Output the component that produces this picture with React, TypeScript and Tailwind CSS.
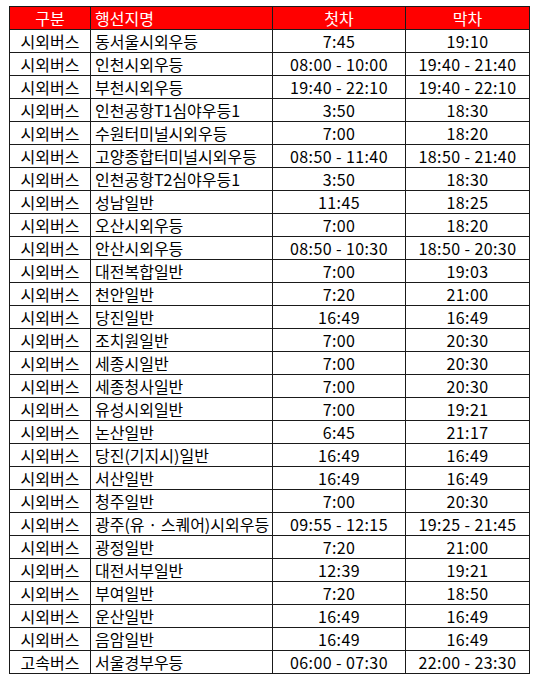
import React from 'react';

type Row = [string, string, string, string];

const ROWS: Row[] = [
  ['시외버스', '동서울시외우등', '7:45', '19:10'],
  ['시외버스', '인천시외우등', '08:00 - 10:00', '19:40 - 21:40'],
  ['시외버스', '부천시외우등', '19:40 - 22:10', '19:40 - 22:10'],
  ['시외버스', '인천공항T1심야우등1', '3:50', '18:30'],
  ['시외버스', '수원터미널시외우등', '7:00', '18:20'],
  ['시외버스', '고양종합터미널시외우등', '08:50 - 11:40', '18:50 - 21:40'],
  ['시외버스', '인천공항T2심야우등1', '3:50', '18:30'],
  ['시외버스', '성남일반', '11:45', '18:25'],
  ['시외버스', '오산시외우등', '7:00', '18:20'],
  ['시외버스', '안산시외우등', '08:50 - 10:30', '18:50 - 20:30'],
  ['시외버스', '대전복합일반', '7:00', '19:03'],
  ['시외버스', '천안일반', '7:20', '21:00'],
  ['시외버스', '당진일반', '16:49', '16:49'],
  ['시외버스', '조치원일반', '7:00', '20:30'],
  ['시외버스', '세종시일반', '7:00', '20:30'],
  ['시외버스', '세종청사일반', '7:00', '20:30'],
  ['시외버스', '유성시외일반', '7:00', '19:21'],
  ['시외버스', '논산일반', '6:45', '21:17'],
  ['시외버스', '당진(기지시)일반', '16:49', '16:49'],
  ['시외버스', '서산일반', '16:49', '16:49'],
  ['시외버스', '청주일반', '7:00', '20:30'],
  ['시외버스', '광주(유 · 스퀘어)시외우등', '09:55 - 12:15', '19:25 - 21:45'],
  ['시외버스', '광정일반', '7:20', '21:00'],
  ['시외버스', '대전서부일반', '12:39', '19:21'],
  ['시외버스', '부여일반', '7:20', '18:50'],
  ['시외버스', '운산일반', '16:49', '16:49'],
  ['시외버스', '음암일반', '16:49', '16:49'],
  ['고속버스', '서울경부우등', '06:00 - 07:30', '22:00 - 23:30'],
];

const cell = 'border border-[#1a1a1a] h-[23px] p-0 leading-[21px]';

export default function App() {
  return (
    <div className="w-[544px] h-[690px] bg-white pt-[6px] pl-[9px] font-['Noto_Sans_CJK_KR',sans-serif] text-[16px] text-black">
      <table className="table-fixed border-collapse w-[520px]">
        <colgroup>
          <col className="w-[81px]" />
          <col className="w-[182px]" />
          <col className="w-[133px]" />
          <col className="w-[124px]" />
        </colgroup>
        <thead>
          <tr className="bg-[#ff0000] text-white">
            <th className={`${cell} font-normal text-center`}>구분</th>
            <th className={`${cell} font-normal text-left pl-[4px]`}>행선지명</th>
            <th className={`${cell} font-normal text-center`}>첫차</th>
            <th className={`${cell} font-normal text-center`}>막차</th>
          </tr>
        </thead>
        <tbody>
          {ROWS.map((r, i) => (
            <tr key={i}>
              <td className={`${cell} text-center`}>{r[0]}</td>
              <td className={`${cell} text-left pl-[4px] whitespace-nowrap`}>{r[1]}</td>
              <td className={`${cell} text-center tracking-[0.4px]`}>{r[2]}</td>
              <td className={`${cell} text-center tracking-[0.4px]`}>{r[3]}</td>
            </tr>
          ))}
        </tbody>
      </table>
    </div>
  );
}
